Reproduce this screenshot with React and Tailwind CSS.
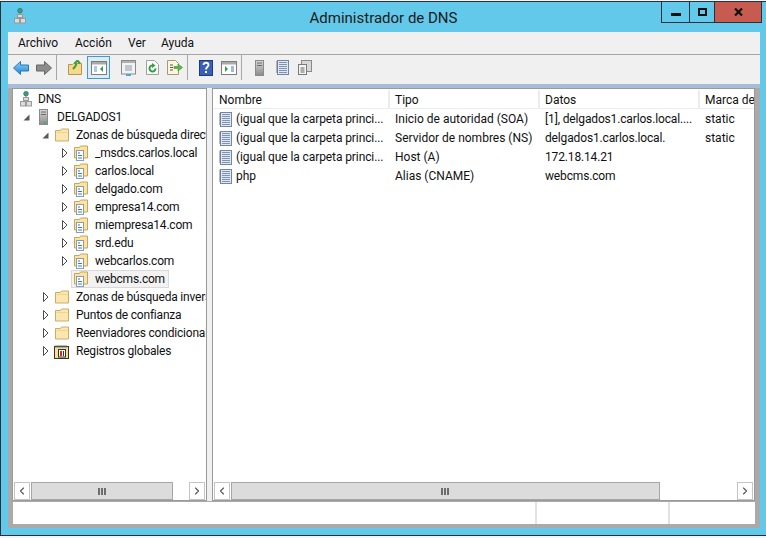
import { ChevronLeft, ChevronRight } from 'lucide-react';

const zones = ['_msdcs.carlos.local', 'carlos.local', 'delgado.com', 'empresa14.com', 'miempresa14.com', 'srd.edu', 'webcarlos.com'];

const records = [
  { name: '(igual que la carpeta princi...', type: 'Inicio de autoridad (SOA)', data: '[1], delgados1.carlos.local....', stamp: 'static' },
  { name: '(igual que la carpeta princi...', type: 'Servidor de nombres (NS)', data: 'delgados1.carlos.local.', stamp: 'static' },
  { name: '(igual que la carpeta princi...', type: 'Host (A)', data: '172.18.14.21', stamp: '' },
  { name: 'php', type: 'Alias (CNAME)', data: 'webcms.com', stamp: '' },
];

function Open() {
  return (
    <svg width="7" height="7" viewBox="0 0 7 7" className="shrink-0">
      <polygon points="6.5,0.5 6.5,6.5 0.5,6.5" fill="#595959" />
    </svg>
  );
}

function Closed() {
  return (
    <svg width="7" height="10" viewBox="0 0 7 10" className="shrink-0">
      <polygon points="1.5,0.5 6,5 1.5,9.5" fill="#fff" stroke="#4d4d4d" />
    </svg>
  );
}

function DnsIcon() {
  return (
    <svg width="12" height="16" viewBox="0 0 12 16" className="shrink-0">
      <circle cx="6" cy="2.700" r="2.300" fill="#3f9f6a" stroke="#2d6f8f" strokeWidth="0.8" />
      <path d="M6 5v3" stroke="#8a8a8a" />
      <rect x="3.500" y="6.500" width="5" height="3" fill="#dcdcdc" stroke="#9a9a9a" />
      <rect x="0.500" y="10.500" width="5" height="4.500" fill="#dcdcdc" stroke="#9a9a9a" />
      <rect x="6.500" y="10.500" width="5" height="4.500" fill="#dcdcdc" stroke="#9a9a9a" />
    </svg>
  );
}

function ServerIcon({ dot = true }) {
  return (
    <svg width="9" height="16" viewBox="0 0 9 16" className="shrink-0">
      <defs>
        <linearGradient id="srv" x1="0" x2="0" y1="0" y2="1">
          <stop offset="0" stopColor="#d8d8d8" />
          <stop offset="1" stopColor="#8b8b8b" />
        </linearGradient>
      </defs>
      <rect x="0.500" y="0.500" width="8" height="15" fill="url(#srv)" stroke="#8a8a8a" />
      <path d="M2 3h5M2 5.500h5" stroke="#6a6a6a" />
      {dot && <rect x="5" y="12.500" width="2" height="2" fill="#27c04a" />}
    </svg>
  );
}

function FolderIcon() {
  return (
    <svg width="14" height="14" viewBox="0 0 14 14" className="shrink-0">
      <path d="M0.500 2.500h5l1-1.500h7v12h-13z" fill="#fbe7ae" stroke="#c9ab6a" />
      <path d="M1.500 4.500h11" stroke="#f0d48c" />
    </svg>
  );
}

function ZoneIcon() {
  return (
    <svg width="14" height="16" viewBox="0 0 14 16" className="shrink-0">
      <path d="M0.500 2.500h5l1-1.500h7v12h-13z" fill="#fbe3a0" stroke="#c4a566" />
      <rect x="2.500" y="5.500" width="7" height="10" fill="#fff" stroke="#8b9bb0" />
      <path d="M4 8h2M4 10.500h4M4 13h4" stroke="#3b78c4" />
    </svg>
  );
}

function GlobalIcon() {
  return (
    <svg width="16" height="15" viewBox="0 0 16 15" className="shrink-0">
      <rect x="0.500" y="2.500" width="14" height="12" fill="#f6e08e" stroke="#333" />
      <path d="M2 1v3M4 1v3M6 1v3M8 1v3M10 1v3M12 1v3" stroke="#777" />
      <rect x="4.500" y="5.500" width="7" height="7.500" fill="#fff" stroke="#333" />
      <path d="M7 7v5" stroke="#d8261c" strokeWidth="2" />
      <path d="M9.500 7v5" stroke="#333" />
    </svg>
  );
}

function RecordIcon() {
  return (
    <svg width="13" height="15" viewBox="0 0 13 15" className="shrink-0">
      <rect x="1.500" y="0.500" width="11" height="14" fill="#dfe8f2" stroke="#6f86a8" />
      <path d="M3 2.500h8M3 4.500h8M3 6.500h8M3 8.500h8M3 10.500h8M3 12.500h8" stroke="#7d93b0" />
      <path d="M0 2h2M0 4h2M0 6h2M0 8h2M0 10h2M0 12h2" stroke="#777" />
    </svg>
  );
}

function BackIcon() {
  return (
    <svg width="16" height="14" viewBox="0 0 16 14" className="shrink-0">
      <defs>
        <linearGradient id="back" x1="0" x2="0" y1="0" y2="1">
          <stop offset="0" stopColor="#8fd3f7" />
          <stop offset="1" stopColor="#1d84d6" />
        </linearGradient>
      </defs>
      <path d="M7.500 0.500L0.500 7l7 6.500V10h8V4h-8z" fill="url(#back)" stroke="#2a78b8" />
    </svg>
  );
}

function ForwardIcon() {
  return (
    <svg width="16" height="14" viewBox="0 0 16 14" className="shrink-0">
      <path d="M8.500 0.500L15.500 7l-7 6.500V10h-8V4h8z" fill="#8c8c8c" stroke="#666" />
    </svg>
  );
}

function UpIcon() {
  return (
    <svg width="14" height="15" viewBox="0 0 14 15" className="shrink-0">
      <path d="M0.500 4.500h4l1-1h8v11h-13z" fill="#f8d88c" stroke="#b8954f" />
      <path d="M5 9C7 7 8 6 8.500 3.500M6.500 3.500L9.500 0.500l2.500 3" fill="none" stroke="#3ba03b" strokeWidth="2" />
    </svg>
  );
}

function PaneIcon({ side }) {
  return (
    <svg width="16" height="14" viewBox="0 0 16 14" className="shrink-0">
      <rect x="0.500" y="0.500" width="15" height="13" fill="#fff" stroke="#7d7d7d" />
      <rect x="1" y="1" width="14" height="2.500" fill="#a9a9a9" />
      {side === 'left' ? (
        <>
          <path d="M3 6h3M3 8h3M3 10h3" stroke="#6b8fb8" />
          <polygon points="12,5 12,11 9,8" fill="#3a9a4a" />
        </>
      ) : (
        <>
          <polygon points="4,5 4,11 7,8" fill="#3a9a4a" />
          <path d="M10 6h3M10 8h3M10 10h3" stroke="#3b78c4" />
        </>
      )}
    </svg>
  );
}

function SheetIcon() {
  return (
    <svg width="15" height="16" viewBox="0 0 15 16" className="shrink-0">
      <rect x="0.500" y="0.500" width="14" height="13.500" fill="#f2f2f2" stroke="#8a8a8a" />
      <rect x="1" y="1" width="13" height="2" fill="#b0b0b0" />
      <path d="M4 6h7M4 8h7M4 10h7" stroke="#8a9aae" />
      <rect x="5" y="14" width="5" height="2" fill="#4aa8d8" />
    </svg>
  );
}

function RefreshIcon() {
  return (
    <svg width="13" height="15" viewBox="0 0 13 15" className="shrink-0">
      <path d="M0.500 0.500h8l4 4v10h-12z" fill="#fafafa" stroke="#a0a0a0" />
      <path d="M9.500 8.500A3 3 0 1 1 7 5.500" fill="none" stroke="#2f9e3f" strokeWidth="2" />
      <polygon points="6,3 9.500,5.500 6,8" fill="#2f9e3f" />
    </svg>
  );
}

function ExportIcon() {
  return (
    <svg width="16" height="15" viewBox="0 0 16 15" className="shrink-0">
      <path d="M0.500 0.500h8l3 3v11h-11z" fill="#fdf6dc" stroke="#a09a80" />
      <path d="M3 5h3M3 7.500h3M3 10h3" stroke="#555" />
      <path d="M7 6.500h4V4l4.500 3.500L11 11V8.500H7z" fill="#58b947" stroke="#3f8f35" strokeWidth="0.6" />
    </svg>
  );
}

function HelpIcon() {
  return (
    <svg width="14" height="16" viewBox="0 0 14 16" className="shrink-0">
      <rect width="14" height="16" fill="#3a5fb8" />
      <rect x="0.500" y="0.500" width="13" height="15" fill="none" stroke="#1d3a80" />
      <path d="M4.500 5C4.500 2 9.500 2 9.500 5c0 2-2.500 2-2.500 4.500" fill="none" stroke="#fff" strokeWidth="1.800" />
      <rect x="6" y="11" width="2" height="2" fill="#fff" />
    </svg>
  );
}

function CopyIcon() {
  return (
    <svg width="14" height="15" viewBox="0 0 14 15" className="shrink-0">
      <rect x="3.500" y="0.500" width="10" height="11" fill="#d8d8d8" stroke="#8a8a8a" />
      <rect x="0.500" y="4.500" width="8" height="10" fill="#f4f4f4" stroke="#7a7a7a" />
      <path d="M2.500 8h4M2.500 10h4M2.500 12h4" stroke="#666" />
    </svg>
  );
}

function Sep({ cls }) {
  return <div className={`h-[25px] w-px bg-[#a6a6a6] shrink-0 ${cls}`} />;
}

function ScrollBar({ thumb, track }) {
  return (
    <div className="flex h-[18px] items-stretch gap-px bg-white px-px shrink-0">
      <div className="w-4 border border-[#c4c4c4] flex items-center justify-center">
        <ChevronLeft size={12} strokeWidth={2.25} className="text-[#555555]" />
      </div>
      <div className={`${thumb} bg-[#dcdcdc] border border-[#a6a6a6] flex items-center justify-center gap-px`}>
        <span className="w-[2px] h-[7px] bg-[#6d6d6d]" />
        <span className="w-[2px] h-[7px] bg-[#6d6d6d]" />
        <span className="w-[2px] h-[7px] bg-[#6d6d6d]" />
      </div>
      <div className={`${track}`} />
      <div className="w-4 border border-[#c4c4c4] flex items-center justify-center">
        <ChevronRight size={12} strokeWidth={2.25} className="text-[#555555]" />
      </div>
    </div>
  );
}

export default function App() {
  return (
    <div className="w-[766px] h-[538px] bg-[#f4f4f4] pt-px overflow-hidden text-[12px] text-[#101010]" style={{ fontFamily: 'Roboto, sans-serif' }}>
      <div className="h-[535px] bg-[#63c9eb] border-t border-b border-l border-[#26323a] flex flex-col">
        {/* Title bar */}
        <div className="h-[30px] shrink-0 grid grid-cols-[1fr_auto_1fr]">
          <div className="pl-[13px] pt-[6px]">
            <DnsIcon />
          </div>
          <div className="pt-[6px] text-[15px] leading-5 text-[#1a1a1a]">Administrador de DNS</div>
          <div className="justify-self-end pr-[4px]">
            <div className="flex h-[21px] border-b border-l border-r border-[#26323a] text-[#111]">
              <div className="w-[28px] flex items-center justify-center border-r border-[#26323a]">
                <span className="block w-[10px] h-[3px] mt-[4px] bg-[#111]" />
              </div>
              <div className="w-[25px] flex items-center justify-center border-r border-[#26323a]">
                <span className="block w-[9px] h-[8px] border-2 border-[#111]" />
              </div>
              <div className="w-[46px] bg-[#c75b50] flex items-center justify-center">
                <svg width="9" height="8" viewBox="0 0 9 8">
                  <path d="M1 0.500L8 7.500M8 0.500L1 7.500" stroke="#111" strokeWidth="2.200" />
                </svg>
              </div>
            </div>
          </div>
        </div>

        {/* Client area */}
        <div className="h-[496px] mx-[7px] w-[752px] bg-[#aaaaaa] flex flex-col shrink-0">
          <div className="h-[22px] bg-[#f0f0f0] border-b border-[#a6a6a6] flex items-center pl-[10px] shrink-0 box-content">
            <span className="w-[57px]">Archivo</span>
            <span className="w-[53px]">Acción</span>
            <span className="w-[33px]">Ver</span>
            <span>Ayuda</span>
          </div>

          <div className="h-[29px] bg-[#f0f0f0] flex items-center pl-[5px] pb-[4px] shrink-0">
            <BackIcon />
            <span className="ml-[7px]"><ForwardIcon /></span>
            <Sep cls="ml-[4px]" />
            <span className="ml-[11px]"><UpIcon /></span>
            <div className="ml-[5px] w-[23px] h-[23px] border border-[#3d9ad6] bg-[#dcecf7] flex items-center justify-center">
              <PaneIcon side="left" />
            </div>
            <span className="ml-[11px]"><SheetIcon /></span>
            <span className="ml-[10px]"><RefreshIcon /></span>
            <span className="ml-[8px]"><ExportIcon /></span>
            <Sep cls="ml-[4px]" />
            <span className="ml-[11px]"><HelpIcon /></span>
            <span className="ml-[8px]"><PaneIcon side="right" /></span>
            <Sep cls="ml-[4px]" />
            <span className="ml-[13px]"><ServerIcon dot={false} /></span>
            <span className="ml-[12px]"><RecordIcon /></span>
            <span className="ml-[9px]"><CopyIcon /></span>
          </div>

          <div className="h-[4px] bg-[#a9bcd6] shrink-0" />

          {/* Panes */}
          <div className="flex h-[413px] pl-[4px] pr-[5px] shrink-0">
            <div className="w-[195px] border border-[#9a9a9a] bg-white flex flex-col shrink-0 pt-px overflow-hidden">
              <div className="flex-1 whitespace-nowrap overflow-hidden leading-[18px] tracking-[-0.2px]">
                <div className="h-[18px] flex items-center pl-[7px] gap-[6px]">
                  <DnsIcon />
                  <span>DNS</span>
                </div>
                <div className="h-[18px] flex items-center pl-[10px]">
                  <Open />
                  <span className="ml-[9px]"><ServerIcon /></span>
                  <span className="ml-[9px]">DELGADOS1</span>
                </div>
                <div className="h-[18px] flex items-center pl-[29px]">
                  <Open />
                  <span className="ml-[6px]"><FolderIcon /></span>
                  <span className="ml-[7px]">Zonas de búsqueda directa</span>
                </div>
                {zones.map((zone) => (
                  <div key={zone} className="h-[18px] flex items-center pl-[48px]">
                    <Closed />
                    <span className="ml-[6px]"><ZoneIcon /></span>
                    <span className="ml-[7px]">{zone}</span>
                  </div>
                ))}
                <div className="h-[18px] flex items-center pl-[58px]">
                  <div className="h-[18px] flex items-center pl-[2px] pr-[3px] w-[98px] bg-[#f2f2f2] border border-[#d9d9d9]">
                    <ZoneIcon />
                    <span className="ml-[7px]">webcms.com</span>
                  </div>
                </div>
                {['Zonas de búsqueda inversa', 'Puntos de confianza', 'Reenviadores condicionales'].map((label) => (
                  <div key={label} className="h-[18px] flex items-center pl-[29px]">
                    <Closed />
                    <span className="ml-[6px]"><FolderIcon /></span>
                    <span className="ml-[7px]">{label}</span>
                  </div>
                ))}
                <div className="h-[18px] flex items-center pl-[29px]">
                  <Closed />
                  <span className="ml-[5px]"><GlobalIcon /></span>
                  <span className="ml-[6px]">Registros globales</span>
                </div>
              </div>
              <ScrollBar thumb="w-[143px]" track="w-[14px]" />
            </div>

            <div className="w-[5px] shrink-0 bg-[#f0f0f0]" />

            <div className="flex-1 min-w-0 border border-[#9a9a9a] bg-white flex flex-col overflow-hidden pt-px">
              <div className="h-[19px] flex shrink-0 border-b border-[#ececec] whitespace-nowrap leading-[20px]">
                <div className="w-[177px] pl-[6px] border-r-2 border-[#ececec] shrink-0">Nombre</div>
                <div className="w-[150px] pl-[5px] border-r-2 border-[#ececec] shrink-0">Tipo</div>
                <div className="w-[160px] pl-[5px] border-r-2 border-[#ececec] shrink-0">Datos</div>
                <div className="pl-[5px] shrink-0">Marca de</div>
              </div>
              <div className="flex-1 whitespace-nowrap overflow-hidden">
                {records.map((rec, i) => (
                  <div key={i} className="h-[19px] flex items-center pt-px">
                    <div className="w-[177px] pl-[6px] flex items-center gap-[4px] shrink-0">
                      <RecordIcon />
                      <span className="tracking-[-0.1px]">{rec.name}</span>
                    </div>
                    <div className="w-[150px] pl-[5px] shrink-0">{rec.type}</div>
                    <div className="w-[160px] pl-[5px] shrink-0 tracking-[-0.15px]">{rec.data}</div>
                    <div className="pl-[5px] shrink-0">{rec.stamp}</div>
                  </div>
                ))}
              </div>
              <ScrollBar thumb="w-[431px]" track="w-[76px]" />
            </div>
          </div>

          {/* Status bar */}
          <div className="h-[22px] mt-px ml-[5px] mr-[5px] bg-white flex shrink-0">
            <div className="w-[522px]" />
            <div className="w-[133px] border-l-2 border-[#e2e2e2]" />
            <div className="flex-1 border-l-2 border-[#e2e2e2]" />
          </div>
        </div>
      </div>
    </div>
  );
}
